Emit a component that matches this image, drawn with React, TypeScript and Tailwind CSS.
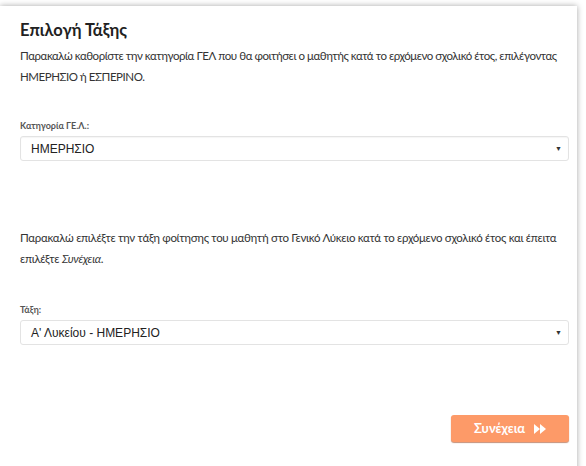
export default function App() {
  const body = "font-['Lato','Noto_Sans',sans-serif]";
  return (
    <div className="min-h-[466px] bg-white pt-[6px] overflow-hidden">
      <div className={`w-[577px] min-h-[470px] bg-white shadow-[0_0_6px_rgba(0,0,0,0.35)] pl-5 pr-[8px] pt-[12px] text-[#333] ${body}`}>
        <h2 className="text-[16.5px] font-bold leading-[24px] text-[#222]">Επιλογή Τάξης</h2>
        <p className="mt-[3px] text-[11.5px] tracking-[-0.45px] leading-[21px] text-[#333]">
          Παρακαλώ καθορίστε την κατηγορία ΓΕΛ που θα φοιτήσει ο μαθητής κατά το ερχόμενο σχολικό έτος, επιλέγοντας
          <br />
          ΗΜΕΡΗΣΙΟ ή ΕΣΠΕΡΙΝΟ.
        </p>

        <div className="mt-[32px]">
          <label className="block text-[9px] font-bold leading-[14px] text-[#555]">Κατηγορία ΓΕ.Λ.:</label>
          <div className="mt-[3px] h-[25px] flex items-center justify-between rounded-[3px] border border-[#e3e3e3] bg-white pl-[10px] pr-[6px] shadow-[inset_0_1px_1px_rgba(0,0,0,0.04)]">
            <span className="font-['Liberation_Sans',sans-serif] text-[12px] text-[#222]">ΗΜΕΡΗΣΙΟ</span>
            <span className="text-[7px] text-[#333]">▼</span>
          </div>
        </div>

        <p className="mt-[66px] text-[11.5px] tracking-[-0.3px] leading-[21px] text-[#333]">
          Παρακαλώ επιλέξτε την τάξη φοίτησης του μαθητή στο Γενικό Λύκειο κατά το ερχόμενο σχολικό έτος και έπειτα επιλέξτε{" "}
          <em className="inline-block">Συνέχεια</em>.
        </p>

        <div className="mt-[34px]">
          <label className="block text-[9px] font-bold leading-[14px] text-[#555]">Τάξη:</label>
          <div className="mt-[3px] h-[25px] flex items-center justify-between rounded-[3px] border border-[#e3e3e3] bg-white pl-[10px] pr-[6px]">
            <span className="font-['Liberation_Sans',sans-serif] text-[12px] text-[#222]">Α' Λυκείου - ΗΜΕΡΗΣΙΟ</span>
            <span className="text-[7px] text-[#333]">▼</span>
          </div>
        </div>

        <div className="mt-[70px] flex justify-end">
          <button className="h-[27px] w-[118px] flex items-center justify-center gap-[9px] rounded-[3px] bg-[#fd9a68] text-white text-[13px] font-bold shadow-[0_1px_1px_rgba(160,70,30,0.6)]">
            <span>Συνέχεια</span>
            <svg width="12" height="10" viewBox="0 0 12 10" fill="white">
              <path d="M0 0 L6 5 L0 10 Z" />
              <path d="M6 0 L12 5 L6 10 Z" />
            </svg>
          </button>
        </div>
      </div>
    </div>
  );
}
